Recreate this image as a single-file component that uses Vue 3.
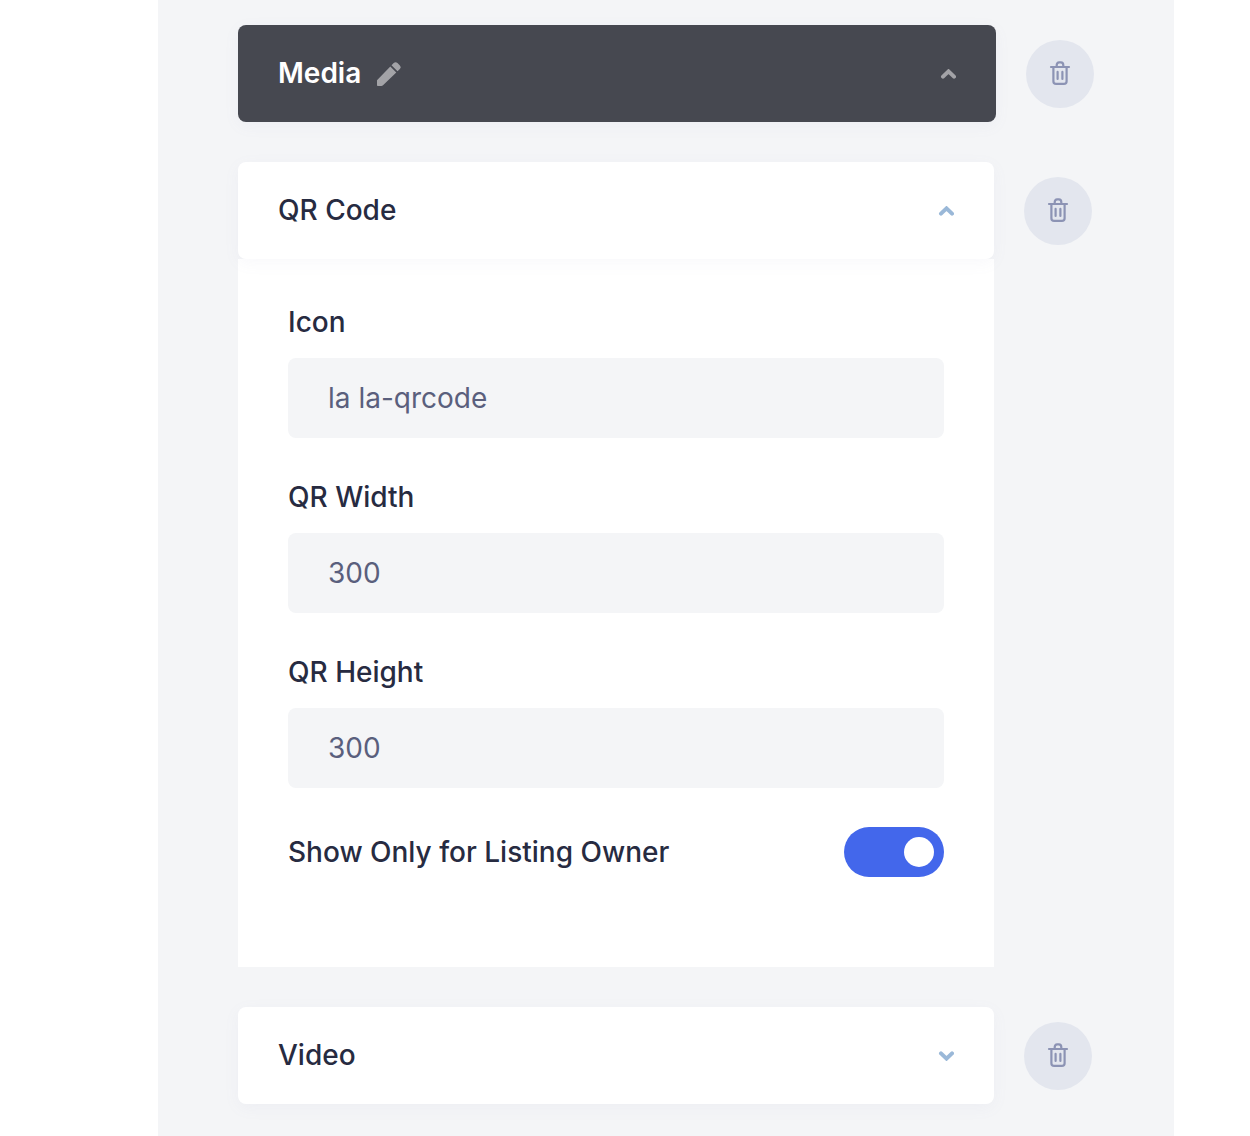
<script setup>
import { ref } from 'vue'

const fields = ref([
  { id: 'icon', label: 'Icon', value: 'la la-qrcode' },
  { id: 'qr-width', label: 'QR Width', value: '300' },
  { id: 'qr-height', label: 'QR Height', value: '300' },
])
const ownerOnly = ref(true)
const groupOpen = ref(true)
const widgets = ref([
  { name: 'QR Code', open: true, configurable: true },
  { name: 'Video', open: false, configurable: false },
])
const trashPath =
  'M2 6h18M7.7 5.6V4.2q0-2.8 2.4-2.8h1.8q2.4 0 2.4 2.8v1.4M4.4 6v14.2q0 2.7 2.7 2.7h7.8q2.7 0 2.7-2.7V6M8.6 10.9v7M13.4 10.9v7'
const chevronPath = 'M3 7.6 8.5 2.4 14 7.6'
</script>

<template>
  <main class="panel">
    <section class="group">
      <div class="row">
        <header class="bar bar-dark">
          <h2 class="title">Media</h2>
          <button class="icon-btn edit" type="button" aria-label="Edit group name">
            <svg width="26" height="26" viewBox="0 0 26 26" fill="currentColor">
              <path d="M1 19.2 14.3 5.5l6 6L7 24.3Q6.3 25 5.4 25H1.8Q1 25 1 24.2Z" />
              <path d="m15.5 4.3 2.2-2.2q1.9-1.9 3.8 0l2.4 2.4q1.8 1.8 0 3.6l-2.4 2.2Z" />
            </svg>
          </button>
          <button class="icon-btn toggle" type="button" aria-label="Toggle group" @click="groupOpen = !groupOpen">
            <svg :class="{ down: !groupOpen }" width="16" height="10" viewBox="0 0 16 10">
              <path :d="chevronPath" />
            </svg>
          </button>
        </header>
        <button class="trash" type="button" aria-label="Delete group">
          <svg width="22" height="26" viewBox="0 0 22 26"><path :d="trashPath" /></svg>
        </button>
      </div>
    </section>

    <section v-for="w in widgets" :key="w.name" class="widget">
      <div class="row">
        <header class="bar">
          <h3 class="title">{{ w.name }}</h3>
          <button class="icon-btn toggle" type="button" :aria-label="'Toggle ' + w.name" @click="w.open = !w.open">
            <svg :class="{ down: !w.open }" width="16" height="10" viewBox="0 0 16 10">
              <path :d="chevronPath" />
            </svg>
          </button>
        </header>
        <button class="trash" type="button" :aria-label="'Delete ' + w.name">
          <svg width="22" height="26" viewBox="0 0 22 26"><path :d="trashPath" /></svg>
        </button>
      </div>
      <form v-if="w.configurable && w.open" class="options" @submit.prevent>
        <div v-for="f in fields" :key="f.id" class="field">
          <label :for="f.id">{{ f.label }}</label>
          <input :id="f.id" v-model="f.value" class="text" type="text" />
        </div>
        <div class="switch-row">
          <label for="owner-only">Show Only for Listing Owner</label>
          <input id="owner-only" v-model="ownerOnly" class="switch" type="checkbox" />
        </div>
      </form>
    </section>
  </main>
</template>

<style>
body {
  background: #fff;
}
</style>

<style scoped>
.panel {
  box-sizing: border-box;
  min-height: 100vh;
  margin: 0 76px 0 158px;
  padding: 25px 80px 32px;
  display: flex;
  flex-direction: column;
  gap: 40px;
  background: #f4f5f7;
  color: #272b41;
  font-family: Inter, "Liberation Sans", sans-serif;
  font-size: 28px;
}
.widget {
  padding-right: 2px;
}
.row {
  display: flex;
  align-items: center;
  gap: 30px;
}
.bar {
  flex: 1;
  box-sizing: border-box;
  min-height: 97px;
  padding: 0 40px;
  display: flex;
  align-items: center;
  background: #fff;
  border-radius: 8px;
  box-shadow: 0 4px 16px rgba(143, 142, 179, 0.06);
  position: relative;
}
.bar-dark {
  background: #464850;
  color: #fff;
}
.title {
  margin: 0;
  padding-bottom: 2px;
  font-size: 28px;
  line-height: 40px;
  font-weight: 500;
}
.bar-dark .title {
  font-weight: 600;
}
.icon-btn {
  padding: 0;
  border: 0;
  background: none;
  display: flex;
  cursor: pointer;
}
.edit {
  margin-left: 15px;
  color: #a3a3a7;
}
.toggle {
  margin-left: auto;
  color: #9ab8d8;
}
.bar-dark .toggle {
  color: #a3a3a7;
}
.toggle svg {
  fill: none;
  stroke: currentColor;
  stroke-width: 4;
  stroke-linecap: round;
}
.down {
  transform: scaleY(-1);
}
.trash {
  flex: none;
  width: 68px;
  height: 68px;
  padding: 0;
  border: 0;
  border-radius: 50%;
  background: #e3e6ee;
  color: #8c93b4;
  display: flex;
  align-items: center;
  justify-content: center;
  cursor: pointer;
}
.trash svg {
  fill: none;
  stroke: currentColor;
  stroke-width: 2.2;
  stroke-linecap: round;
}
.options {
  margin-right: 98px;
  padding: 43px 50px 90px;
  background: #fff;
}
.field {
  display: flex;
  flex-direction: column;
  gap: 16px;
  margin-bottom: 39px;
}
label {
  line-height: 40px;
  font-weight: 500;
}
.text {
  box-sizing: border-box;
  width: 100%;
  height: 80px;
  padding: 0 40px;
  border: 0;
  border-radius: 8px;
  background: #f4f5f7;
  color: #5a5f7d;
  font-family: inherit;
  font-size: 28px;
}
.switch-row {
  display: flex;
  align-items: center;
  justify-content: space-between;
}
.switch {
  appearance: none;
  box-sizing: border-box;
  width: 100px;
  height: 50px;
  margin: 0;
  padding: 10px;
  border-radius: 25px;
  background: #c6cad8;
  display: flex;
  cursor: pointer;
}
.switch::before {
  content: "";
  width: 30px;
  height: 30px;
  border-radius: 50%;
  background: #fff;
}
.switch:checked {
  justify-content: flex-end;
  background: #4367eb;
}
</style>
